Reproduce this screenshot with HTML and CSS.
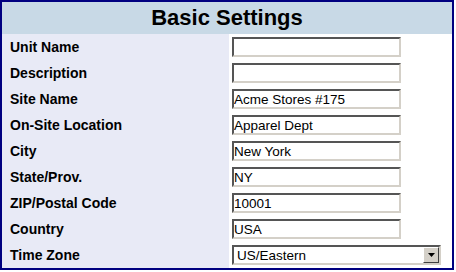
FILE: index.html
```html
<!DOCTYPE html>
<html lang="en">
<head>
  <meta charset="UTF-8" />
  <title>Basic Settings</title>
  <link rel="stylesheet" href="styles.css">
</head>
<body>
  <div class="settings">
    <div class="settings-title">Basic Settings</div>

    <div class="row">
      <label class="label" for="unit-name">Unit Name</label>
      <div class="value"><input type="text" id="unit-name" class="field" value=""></div>
    </div>
    <div class="row">
      <label class="label" for="description">Description</label>
      <div class="value"><input type="text" id="description" class="field" value=""></div>
    </div>
    <div class="row">
      <label class="label" for="site-name">Site Name</label>
      <div class="value"><input type="text" id="site-name" class="field" value="Acme Stores #175"></div>
    </div>
    <div class="row">
      <label class="label" for="location">On-Site Location</label>
      <div class="value"><input type="text" id="location" class="field" value="Apparel Dept"></div>
    </div>
    <div class="row">
      <label class="label" for="city">City</label>
      <div class="value"><input type="text" id="city" class="field" value="New York"></div>
    </div>
    <div class="row">
      <label class="label" for="state">State/Prov.</label>
      <div class="value"><input type="text" id="state" class="field" value="NY"></div>
    </div>
    <div class="row">
      <label class="label" for="zip">ZIP/Postal Code</label>
      <div class="value"><input type="text" id="zip" class="field" value="10001"></div>
    </div>
    <div class="row">
      <label class="label" for="country">Country</label>
      <div class="value"><input type="text" id="country" class="field" value="USA"></div>
    </div>
    <div class="row">
      <label class="label" for="timezone">Time Zone</label>
      <div class="value">
        <div class="select-wrap">
          <select id="timezone" class="field select">
            <option>US/Eastern</option>
            <option>US/Central</option>
            <option>US/Mountain</option>
            <option>US/Pacific</option>
          </select>
          <span class="select-btn">
            <svg width="7" height="4" viewBox="0 0 7 4"><path d="M0 0h7L3.5 4z" fill="#000"/></svg>
          </span>
        </div>
      </div>
    </div>
  </div>
</body>
</html>
```

FILE: styles.css
```css
body {
  margin: 0;
  background: #fff;
  font-family: "Liberation Sans", Arial, sans-serif;
}
.settings {
  width: 450px;
  border: 2px solid #000080;
}
.settings-title {
  height: 32px;
  line-height: 31px;
  background: #c8d9e6;
  text-align: center;
  font-size: 22px;
  font-weight: bold;
  color: #000;
}
.row {
  display: grid;
  grid-template-columns: 227px 1fr;
  height: 26px;
}
.label {
  display: flex;
  align-items: center;
  padding-left: 8px;
  background: #e8eaf6;
  font-size: 14px;
  font-weight: bold;
  color: #000;
}
.value {
  display: flex;
  align-items: center;
  padding-left: 3px;
  background: #fff;
}
.field {
  box-sizing: border-box;
  width: 169px;
  height: 20px;
  margin: 0;
  padding: 0;
  font-family: "Liberation Sans", Arial, sans-serif;
  font-size: 13.5px;
  color: #000;
  background: #fff;
  border: 2px solid;
  border-color: #555 #d4d0c8 #d4d0c8 #555;
  outline: none;
}
.select-wrap {
  position: relative;
  width: 209px;
  height: 20px;
}
.select {
  width: 209px;
  appearance: none;
  -webkit-appearance: none;
  border-radius: 0;
  padding-left: 3px;
}
.select-btn {
  position: absolute;
  top: 2px;
  right: 2px;
  width: 16px;
  height: 16px;
  box-sizing: border-box;
  display: flex;
  align-items: center;
  justify-content: center;
  background: #d4d0c8;
  border: 1px solid;
  border-color: #fff #404040 #404040 #fff;
  pointer-events: none;
}
```
